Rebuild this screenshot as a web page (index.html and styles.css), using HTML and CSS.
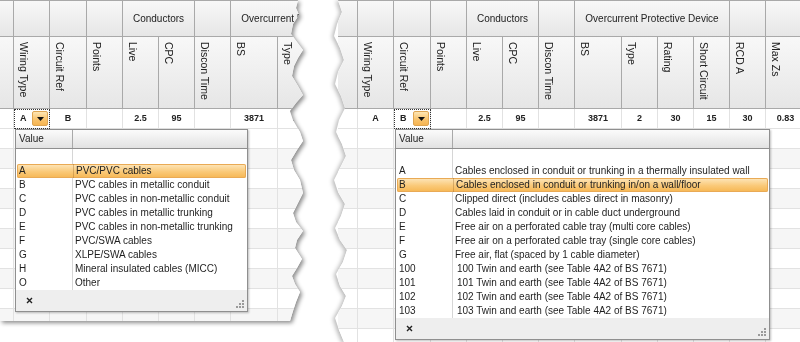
FILE: index.html
```html
<!DOCTYPE html>
<html lang="en">
<head>
    <meta charset="UTF-8">
    <title>Wiring type lookup</title>
    <link rel="stylesheet" href="styles.css">
</head>
<body>
<div class="page">
    <!-- left shot: wiring type list -->
    <div class="shot shot-left">
        <div class="sheet">
            <div class="grid grid-left">
                <!-- header row 1 -->
                <div class="hd1"></div>
                <div class="hd1"></div>
                <div class="hd1"></div>
                <div class="hd1"></div>
                <div class="hd1 span2">Conductors</div>
                <div class="hd1"></div>
                <div class="hd1 span4">Overcurrent Protective Device</div>
                <div class="hd1"></div>
                <div class="hd1"></div>
                <!-- header row 2 -->
                <div class="hd2"></div>
                <div class="hd2"><span>Wiring Type</span></div>
                <div class="hd2"><span>Circuit Ref</span></div>
                <div class="hd2"><span>Points</span></div>
                <div class="hd2"><span>Live</span></div>
                <div class="hd2"><span>CPC</span></div>
                <div class="hd2"><span>Discon Time</span></div>
                <div class="hd2"><span>BS</span></div>
                <div class="hd2"><span>Type</span></div>
                <div class="hd2"><span>Rating</span></div>
                <div class="hd2"><span>Short Circuit</span></div>
                <div class="hd2"><span>RCD A</span></div>
                <div class="hd2"><span>Max Zs</span></div>
                <!-- data row -->
                <div class="td"></div>
                <div class="td ed"><span>A</span><i class="drop"><svg width="7" height="4" viewBox="0 0 7 4"><path d="M0 0h7L3.5 4z" fill="#111"/></svg></i></div>
                <div class="td">B</div>
                <div class="td"></div>
                <div class="td">2.5</div>
                <div class="td">95</div>
                <div class="td"></div>
                <div class="td">3871</div>
                <div class="td">2</div>
                <div class="td">30</div>
                <div class="td">15</div>
                <div class="td">30</div>
                <div class="td">0.83</div>
                <!-- empty rows -->
                <div class="fill"></div><div class="fill"></div><div class="fill"></div><div class="fill"></div><div class="fill"></div><div class="fill"></div><div class="fill"></div><div class="fill"></div><div class="fill"></div><div class="fill"></div><div class="fill"></div><div class="fill"></div><div class="fill"></div>
            </div>

            <div class="popup pop-left">
                <div class="pop-head"><div>Value</div><div></div></div>
                <div class="pop-body">
                    <div class="pop-row sel"><span>A</span><span>PVC/PVC cables</span></div>
                    <div class="pop-row"><span>B</span><span>PVC cables in metallic conduit</span></div>
                    <div class="pop-row"><span>C</span><span>PVC cables in non-metallic conduit</span></div>
                    <div class="pop-row"><span>D</span><span>PVC cables in metallic trunking</span></div>
                    <div class="pop-row"><span>E</span><span>PVC cables in non-metallic trunking</span></div>
                    <div class="pop-row"><span>F</span><span>PVC/SWA cables</span></div>
                    <div class="pop-row"><span>G</span><span>XLPE/SWA cables</span></div>
                    <div class="pop-row"><span>H</span><span>Mineral insulated cables (MICC)</span></div>
                    <div class="pop-row"><span>O</span><span>Other</span></div>
                </div>
                <div class="pop-foot">
                    <svg class="close" width="7" height="7" viewBox="0 0 7 7"><path d="M1 1l5 5M6 1L1 6" stroke="#222" stroke-width="1.4"/></svg>
                    <svg class="grip" width="9" height="9" viewBox="0 0 9 9" fill="#9a9a9a"><rect x="7" y="1" width="2" height="2"/><rect x="4" y="4" width="2" height="2"/><rect x="7" y="4" width="2" height="2"/><rect x="1" y="7" width="2" height="2"/><rect x="4" y="7" width="2" height="2"/><rect x="7" y="7" width="2" height="2"/></svg>
                </div>
            </div>
        </div>
    </div>

    <!-- right shot: installation method list -->
    <div class="shot shot-right">
        <div class="sheet">
            <div class="grid grid-right">
                <div class="hd1"></div>
                <div class="hd1"></div>
                <div class="hd1"></div>
                <div class="hd1"></div>
                <div class="hd1 span2">Conductors</div>
                <div class="hd1"></div>
                <div class="hd1 span4">Overcurrent Protective Device</div>
                <div class="hd1"></div>
                <div class="hd1"></div>

                <div class="hd2"></div>
                <div class="hd2"><span>Wiring Type</span></div>
                <div class="hd2"><span>Circuit Ref</span></div>
                <div class="hd2"><span>Points</span></div>
                <div class="hd2"><span>Live</span></div>
                <div class="hd2"><span>CPC</span></div>
                <div class="hd2"><span>Discon Time</span></div>
                <div class="hd2"><span>BS</span></div>
                <div class="hd2"><span>Type</span></div>
                <div class="hd2"><span>Rating</span></div>
                <div class="hd2"><span>Short Circuit</span></div>
                <div class="hd2"><span>RCD A</span></div>
                <div class="hd2"><span>Max Zs</span></div>

                <div class="td"></div>
                <div class="td">A</div>
                <div class="td ed"><span>B</span><i class="drop"><svg width="7" height="4" viewBox="0 0 7 4"><path d="M0 0h7L3.5 4z" fill="#111"/></svg></i></div>
                <div class="td"></div>
                <div class="td">2.5</div>
                <div class="td">95</div>
                <div class="td"></div>
                <div class="td">3871</div>
                <div class="td">2</div>
                <div class="td">30</div>
                <div class="td">15</div>
                <div class="td">30</div>
                <div class="td">0.83</div>

                <div class="fill"></div><div class="fill"></div><div class="fill"></div><div class="fill"></div><div class="fill"></div><div class="fill"></div><div class="fill"></div><div class="fill"></div><div class="fill"></div><div class="fill"></div><div class="fill"></div><div class="fill"></div><div class="fill"></div>
            </div>

            <div class="popup pop-right">
                <div class="pop-head"><div>Value</div><div></div></div>
                <div class="pop-body">
                    <div class="pop-row"><span>A</span><span>Cables enclosed in conduit or trunking in a thermally insulated wall</span></div>
                    <div class="pop-row sel"><span>B</span><span>Cables enclosed in conduit or trunking in/on a wall/floor</span></div>
                    <div class="pop-row"><span>C</span><span>Clipped direct (includes cables direct in masonry)</span></div>
                    <div class="pop-row"><span>D</span><span>Cables laid in conduit or in cable duct underground</span></div>
                    <div class="pop-row"><span>E</span><span>Free air on a perforated cable tray (multi core cables)</span></div>
                    <div class="pop-row"><span>F</span><span>Free air on a perforated cable tray (single core cables)</span></div>
                    <div class="pop-row"><span>G</span><span>Free air, flat (spaced by 1 cable diameter)</span></div>
                    <div class="pop-row num"><span>100</span><span>100 Twin and earth (see Table 4A2 of BS 7671)</span></div>
                    <div class="pop-row num"><span>101</span><span>101 Twin and earth (see Table 4A2 of BS 7671)</span></div>
                    <div class="pop-row num"><span>102</span><span>102 Twin and earth (see Table 4A2 of BS 7671)</span></div>
                    <div class="pop-row num"><span>103</span><span>103 Twin and earth (see Table 4A2 of BS 7671)</span></div>
                </div>
                <div class="pop-foot">
                    <svg class="close" width="7" height="7" viewBox="0 0 7 7"><path d="M1 1l5 5M6 1L1 6" stroke="#222" stroke-width="1.4"/></svg>
                    <svg class="grip" width="9" height="9" viewBox="0 0 9 9" fill="#9a9a9a"><rect x="7" y="1" width="2" height="2"/><rect x="4" y="4" width="2" height="2"/><rect x="7" y="4" width="2" height="2"/><rect x="1" y="7" width="2" height="2"/><rect x="4" y="7" width="2" height="2"/><rect x="7" y="7" width="2" height="2"/></svg>
                </div>
            </div>
        </div>
    </div>
</div>
</body>
</html>
```

FILE: styles.css
```css
*{
    margin: 0;
    padding: 0;
    box-sizing: border-box;
}
body{
    background: #fff;
    font-family: "Liberation Sans", Arial, sans-serif;
    color: #222;
    overflow: hidden;
}
.page{
    display: flex;
    align-items: flex-start;
    gap: 24px;
    width: 800px;
    height: 342px;
}

/* torn screenshot pieces */
.shot-left{
    width: 306px;
    height: 321px;
    flex: none;
    filter: drop-shadow(2px 2px 2px rgba(0,0,0,.45));
}
.shot-right{
    width: 470px;
    height: 342px;
    flex: none;
    filter: drop-shadow(-2px 1px 2px rgba(0,0,0,.28));
}
.sheet{
    position: relative;
    width: 100%;
    height: 100%;
    overflow: hidden;
    background: #fff;
}
.shot-left .sheet{
    clip-path: polygon(0 0, 298px 0, 296px 8px, 299px 15px, 293px 24px, 291px 34px, 297px 42px, 303px 50px, 298px 58px, 294px 66px, 292px 76px, 298px 86px, 303px 95px, 296px 103px, 290px 111px, 293px 120px, 300px 132px, 303px 141px, 297px 150px, 291px 160px, 294px 170px, 300px 180px, 303px 193px, 298px 203px, 293px 213px, 296px 222px, 303px 231px, 297px 240px, 295px 248px, 302px 259px, 297px 268px, 292px 276px, 295px 284px, 300px 292px, 296px 302px, 293px 311px, 290px 321px, 0 321px);
}
.shot-right .sheet{
    clip-path: polygon(8px 0, 470px 0, 470px 342px, 14px 342px, 9px 330px, 5px 318px, 12px 306px, 16px 296px, 10px 286px, 6px 274px, 13px 262px, 17px 250px, 10px 240px, 5px 228px, 11px 216px, 15px 204px, 8px 192px, 4px 180px, 10px 168px, 16px 156px, 12px 144px, 6px 132px, 9px 120px, 15px 108px, 11px 96px, 5px 84px, 8px 72px, 14px 60px, 10px 48px, 4px 36px, 7px 24px, 12px 12px);
}

/* grid */
.grid{
    display: grid;
    grid-template-columns: 20px 36px 37px 36px 36px 36px 36px 47px 36px 36px 36px 36px 40px;
    grid-template-rows: 37px 72px 20px 1fr;
    width: 468px;
    height: 100%;
}
.grid-left{
    margin-left: -6px;
}
.grid-right{
    margin-left: 8px;
}
.hd1, .hd2{
    background: linear-gradient(#f8f8f8, #e6e6e6);
    border-right: 1px solid #a9a9a9;
    border-bottom: 1px solid #a9a9a9;
}
.hd1{
    border-top: 1px solid #a9a9a9;
    font-size: 10px;
    display: flex;
    align-items: center;
    justify-content: center;
    white-space: nowrap;
}
.span2{
    grid-column: span 2;
}
.span4{
    grid-column: span 4;
}
.hd2{
    display: flex;
    align-items: flex-start;
    padding: 5px 0 0 4px;
    font-size: 10.5px;
}
.hd2 span{
    writing-mode: vertical-rl;
    line-height: 12px;
    white-space: nowrap;
}
.td{
    border-right: 1px solid #e2e2e2;
    border-bottom: 1px solid #e2e2e2;
    font-size: 9px;
    font-weight: bold;
    line-height: 19px;
    text-align: center;
    white-space: nowrap;
}
.ed{
    display: flex;
    align-items: center;
    justify-content: space-between;
    padding: 0 1px 0 6px;
    outline: 1px dotted #333;
    outline-offset: -1px;
}
.drop{
    display: flex;
    align-items: center;
    justify-content: center;
    width: 16px;
    height: 15px;
    border: 1px solid #dea552;
    border-radius: 2px;
    background: linear-gradient(#fee6b4, #f9c46e 55%, #f6b452);
}
.fill{
    border-right: 1px solid #e2e2e2;
    background: repeating-linear-gradient(#fff 0 19px, #e2e2e2 19px 20px, #f6f6f6 20px 39px, #e2e2e2 39px 40px);
}

/* lookup popup */
.popup{
    position: absolute;
    top: 129px;
    display: flex;
    flex-direction: column;
    background: #fff;
    border: 1px solid #8f8f8f;
    box-shadow: 1px 1px 2px rgba(0,0,0,.25);
    font-size: 10px;
    color: #1e1e1e;
}
.pop-left{
    left: 15px;
    width: 233px;
}
.pop-right{
    left: 65px;
    width: 375px;
}
.pop-head{
    display: grid;
    grid-template-columns: 57px 1fr;
    height: 19px;
    border-bottom: 1px solid #8f8f8f;
    background: linear-gradient(#fbfbfb, #e2e2e2);
}
.pop-head div{
    border-right: 1px solid #a9a9a9;
    padding-left: 3px;
    line-height: 18px;
    font-size: 10px;
}
.pop-head div:last-child{
    border-right: 0;
}
.pop-body{
    padding-top: 15px;
    background: linear-gradient(to right, transparent 56px, #d6d6d6 56px 57px, transparent 57px);
}
.pop-row{
    display: grid;
    grid-template-columns: 57px 1fr;
    height: 14px;
    line-height: 14px;
    white-space: nowrap;
}
.pop-row span:first-child{
    padding-left: 3px;
}
.pop-row span:last-child{
    padding-left: 2px;
}
.num span:last-child{
    padding-left: 4px;
}
.sel{
    margin: 0 1px;
    border-radius: 2px;
    background: linear-gradient(#fde7bd, #fac978 55%, #f6b652);
    box-shadow: inset 0 0 0 1px #e9aa55;
}
.sel span:first-child{
    padding-left: 2px;
    border-right: 1px solid rgba(150,100,40,.35);
}
.pop-foot{
    display: flex;
    align-items: center;
    justify-content: space-between;
    height: 21px;
    padding: 0 3px 0 10px;
    background: #eeeeee;
}
.grip{
    align-self: flex-end;
    margin-bottom: 3px;
}
```
